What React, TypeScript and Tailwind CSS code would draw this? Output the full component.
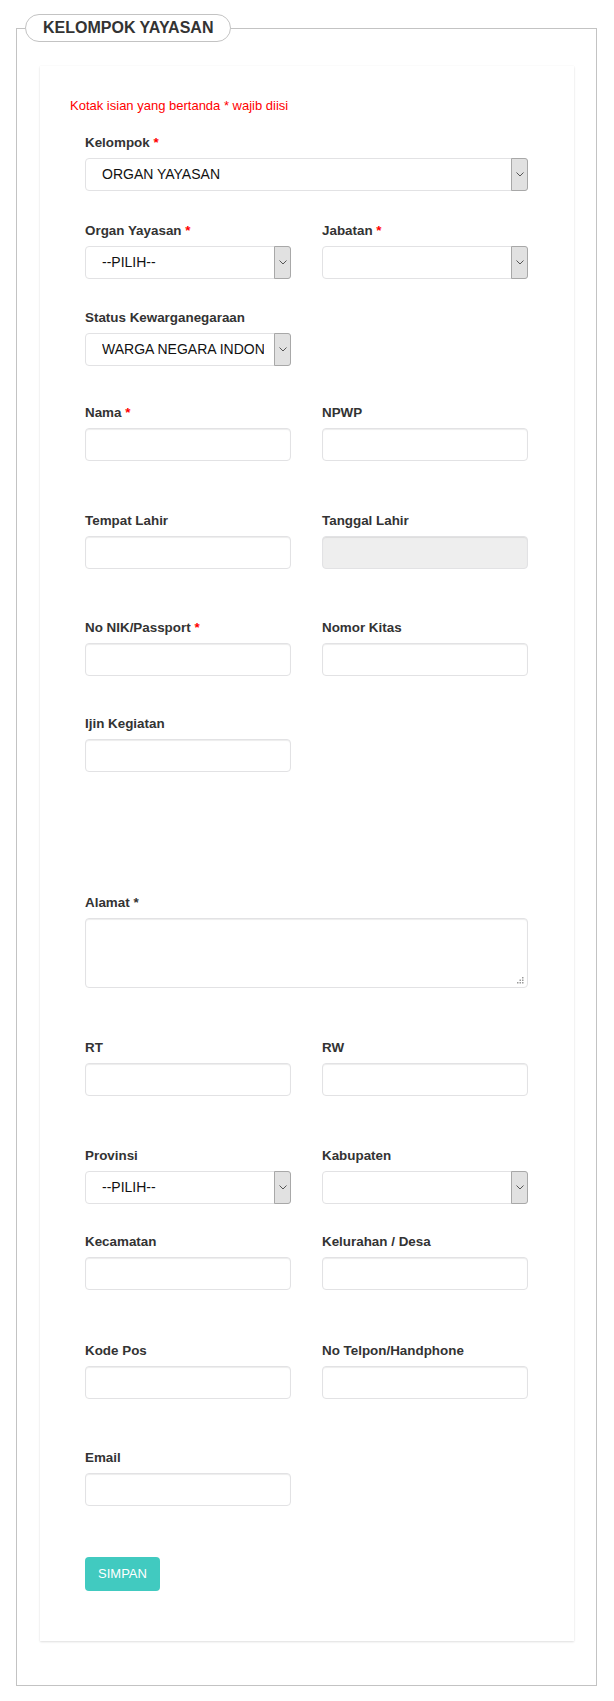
import React from "react";

type Field = {
  label: string;
  req?: "red" | "plain";
  kind?: "input" | "select" | "readonly";
  value?: string;
};

function Label({ label, req }: { label: string; req?: "red" | "plain" }) {
  return (
    <div className="text-[13.4px] font-bold leading-[18px] text-[#333] mb-[6px]">
      {label}
      {req && (
        <span className={req === "red" ? "text-[#ff0000]" : "text-[#333]"}> *</span>
      )}
    </div>
  );
}

function Select({ value }: { value?: string }) {
  return (
    <div className="flex h-[33px] w-full rounded-[4px] border border-[#e2e2e4] bg-white">
      <div className="ml-[16px] mr-[10px] flex-1 overflow-hidden whitespace-nowrap text-[14px] leading-[31px] text-[#111]">
        {value}
      </div>
      <div className="flex w-[17px] items-center justify-center rounded-r-[3px] border border-[#a8a8a8] bg-[#e1e1e1] -my-px -mr-px">
        <svg width="8" height="5" viewBox="0 0 8 5">
          <path d="M0.5 0.5 L4 4 L7.5 0.5" fill="none" stroke="#555" strokeWidth="1" />
        </svg>
      </div>
    </div>
  );
}

function Input({ readonly }: { readonly?: boolean }) {
  return (
    <input
      readOnly={readonly}
      className={
        "block h-[33px] w-full rounded-[4px] border border-[#e2e2e4] px-3 text-[14px] text-[#555] outline-none shadow-[inset_0_1px_1px_rgba(0,0,0,0.075)] " +
        (readonly ? "bg-[#eeeeee]" : "bg-white")
      }
    />
  );
}

function FieldBox({ f }: { f: Field }) {
  return (
    <div>
      <Label label={f.label} req={f.req} />
      {f.kind === "select" ? (
        <Select value={f.value} />
      ) : (
        <Input readonly={f.kind === "readonly"} />
      )}
    </div>
  );
}

function Row({ fields, mt }: { fields: Field[]; mt: string }) {
  return (
    <div className={"grid grid-cols-2 gap-x-[31px] " + mt}>
      {fields.map((f) => (
        <FieldBox key={f.label} f={f} />
      ))}
    </div>
  );
}

export default function App() {
  return (
    <div className="min-h-[1701px] bg-white pt-[14px] pb-[14px] font-['Liberation_Sans',Arial,sans-serif]">
      <fieldset className="ml-4 mr-[17px] border border-[#c3c3c3] px-2">
        <legend className="h-[28px] rounded-[15px] border border-[#c3c3c3] bg-white px-[17px] text-[16px] font-bold leading-[26px] text-[#333]">
          KELOMPOK YAYASAN
        </legend>

        <div className="mt-6 mb-[44px] ml-[15px] mr-[14px] bg-white px-[30px] pt-[31px] pb-[50px] shadow-[0_1px_2px_rgba(0,0,0,0.12),0_0_1px_rgba(0,0,0,0.06)]">
          <div className="text-[13px] leading-[18px] text-[#ff0000]">
            Kotak isian yang bertanda * wajib diisi
          </div>

          <div className="pl-[15px] pr-[16px]">
            <div className="mt-[19px]">
              <Label label="Kelompok" req="red" />
              <Select value="ORGAN YAYASAN" />
            </div>

            <Row
              mt="mt-[31px]"
              fields={[
                { label: "Organ Yayasan", req: "red", kind: "select", value: "--PILIH--" },
                { label: "Jabatan", req: "red", kind: "select", value: "" },
              ]}
            />
            <Row
              mt="mt-[30px]"
              fields={[{ label: "Status Kewarganegaraan", kind: "select", value: "WARGA NEGARA INDONESIA" }]}
            />
            <Row mt="mt-[38px]" fields={[{ label: "Nama", req: "red" }, { label: "NPWP" }]} />
            <Row
              mt="mt-[51px]"
              fields={[{ label: "Tempat Lahir" }, { label: "Tanggal Lahir", kind: "readonly" }]}
            />
            <Row
              mt="mt-[50px]"
              fields={[{ label: "No NIK/Passport", req: "red" }, { label: "Nomor Kitas" }]}
            />
            <Row mt="mt-[39px]" fields={[{ label: "Ijin Kegiatan" }]} />

            <div className="mt-[122px]">
              <Label label="Alamat" req="plain" />
              <div className="relative h-[70px] w-full rounded-[4px] border border-[#e2e2e4] bg-white shadow-[inset_0_1px_1px_rgba(0,0,0,0.075)]">
                <svg className="absolute right-[3px] bottom-[3px]" width="7" height="7" viewBox="0 0 7 7">
                  <rect x="5" y="0" width="1.5" height="1.5" fill="#9a9a9a" />
                  <rect x="2.5" y="2.5" width="1.5" height="1.5" fill="#9a9a9a" />
                  <rect x="5" y="2.5" width="1.5" height="1.5" fill="#9a9a9a" />
                  <rect x="0" y="5" width="1.5" height="1.5" fill="#9a9a9a" />
                  <rect x="2.5" y="5" width="1.5" height="1.5" fill="#9a9a9a" />
                  <rect x="5" y="5" width="1.5" height="1.5" fill="#9a9a9a" />
                </svg>
              </div>
            </div>

            <Row mt="mt-[51px]" fields={[{ label: "RT" }, { label: "RW" }]} />
            <Row
              mt="mt-[51px]"
              fields={[
                { label: "Provinsi", kind: "select", value: "--PILIH--" },
                { label: "Kabupaten", kind: "select", value: "" },
              ]}
            />
            <Row mt="mt-[29px]" fields={[{ label: "Kecamatan" }, { label: "Kelurahan / Desa" }]} />
            <Row mt="mt-[52px]" fields={[{ label: "Kode Pos" }, { label: "No Telpon/Handphone" }]} />
            <Row mt="mt-[50px]" fields={[{ label: "Email" }]} />

            <button className="mt-[51px] h-[34px] w-[75px] rounded-[4px] bg-[#41cac0] text-[13px] text-white">
              SIMPAN
            </button>
          </div>
        </div>
      </fieldset>
    </div>
  );
}
